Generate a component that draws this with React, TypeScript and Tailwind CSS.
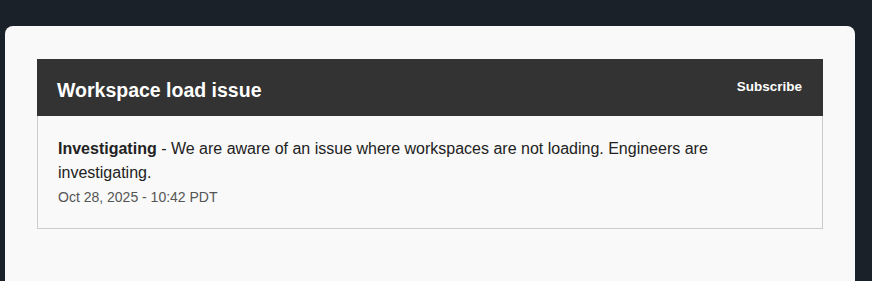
import React from "react";

export default function App() {
  return (
    <div className="min-h-[281px] bg-[#1b2129] pt-[26px] pl-[5px] pr-[17px] overflow-hidden" style={{ fontFamily: '"Liberation Sans", Arial, sans-serif' }}>
      <div className="bg-[#f9f9f9] rounded-t-[8px] h-[260px] pt-[33px] px-[32px]">
        <div className="flex items-center justify-between bg-[#333333] h-[57px] pl-[20px] pr-[21px]">
          <h2 className="text-white font-bold text-[19.5px] leading-[24px] pt-[5px]">Workspace load issue</h2>
          <a className="text-white font-bold text-[13.5px] leading-[16px] -mt-[2px]">Subscribe</a>
        </div>
        <div className="border border-t-0 border-[#cccccc] px-[20px] pt-[21px] pb-[21px]">
          <div className="text-[16px] leading-[24px] text-[#222222]">
            <strong className="font-bold">Investigating</strong> - We are aware of an issue where workspaces are not loading. Engineers are investigating.
          </div>
          <div className="text-[14px] leading-[20px] text-[#555555] mt-[2px]">Oct 28, 2025 - 10:42 PDT</div>
        </div>
      </div>
    </div>
  );
}
